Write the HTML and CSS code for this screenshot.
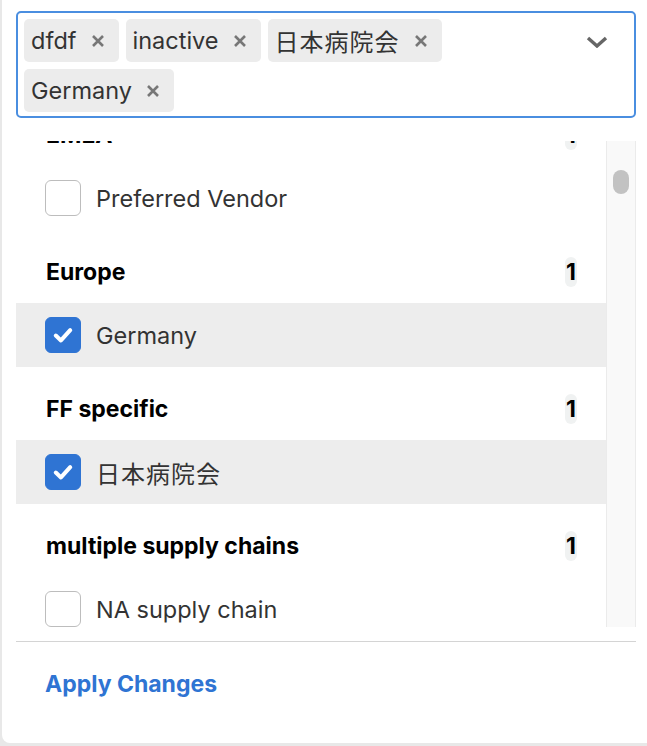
FILE: index.html
```html
<!DOCTYPE html>
<html>
<head>
<meta charset="utf-8">
<link rel="stylesheet" href="styles.css">
</head>
<body>
<div class="panel">
  <div class="select">
    <div class="chips">
      <span class="chip">dfdf<svg class="x" viewBox="0 0 14 14"><path d="M2 2L12 12M12 2L2 12"/></svg></span>
      <span class="chip">inactive<svg class="x" viewBox="0 0 14 14"><path d="M2 2L12 12M12 2L2 12"/></svg></span>
      <span class="chip"><span class="cjk">日本病院会</span><svg class="x" viewBox="0 0 14 14"><path d="M2 2L12 12M12 2L2 12"/></svg></span>
      <span class="chip">Germany<svg class="x" viewBox="0 0 14 14"><path d="M2 2L12 12M12 2L2 12"/></svg></span>
    </div>
    <svg class="chevron" viewBox="0 0 22 12"><path d="M2 2L11 10L20 2"/></svg>
  </div>
  <div class="listwrap">
    <div class="list">
      <div class="scroller">
        <div class="group-head"><span>EMEA</span><span class="count">1</span></div>
        <div class="item"><span class="box"></span><span>Preferred Vendor</span></div>
        <div class="group-head"><span>Europe</span><span class="count">1</span></div>
        <div class="item selected"><span class="box checked"><svg viewBox="0 0 20 20"><path d="M4 10.5L8.3 14.5L16 6"/></svg></span><span>Germany</span></div>
        <div class="group-head"><span>FF specific</span><span class="count">1</span></div>
        <div class="item selected"><span class="box checked"><svg viewBox="0 0 20 20"><path d="M4 10.5L8.3 14.5L16 6"/></svg></span><span class="cjk">日本病院会</span></div>
        <div class="group-head"><span>multiple supply chains</span><span class="count">1</span></div>
        <div class="item"><span class="box"></span><span>NA supply chain</span></div>
      </div>
    </div>
    <div class="scrollbar"><div class="thumb"></div></div>
  </div>
  <div class="divider"></div>
  <div class="footer"><span class="apply">Apply Changes</span></div>
</div>
</body>
</html>
```
FILE: styles.css
```css
html, body {
  margin: 0;
  padding: 0;
}
body {
  background: #e8e8e8;
  font-family: Inter, "Noto Sans CJK JP", sans-serif;
  width: 647px;
  height: 746px;
  overflow: hidden;
}
.panel {
  margin-left: 2px;
  height: 743px;
  background: #fff;
  border-bottom-left-radius: 8px;
  padding: 11px 11px 0 14px;
  box-sizing: border-box;
}
.select {
  height: 107px;
  box-sizing: border-box;
  border: 2px solid #4a8ee0;
  border-radius: 5px;
  padding: 6px 26px 4px 6px;
  display: flex;
  justify-content: space-between;
  align-items: flex-start;
}
.chips {
  display: flex;
  flex-wrap: wrap;
  gap: 7px;
  width: 540px;
}
.chip {
  height: 43px;
  background: #ececec;
  border-radius: 5px;
  padding: 0 14px 0 7px;
  display: flex;
  align-items: center;
  font-size: 23.5px;
  color: #333;
}
.cjk {
  font-family: "Noto Sans CJK JP", sans-serif;
  font-size: 24px;
  letter-spacing: 1px;
}
.x {
  width: 14px;
  height: 14px;
  margin-left: 14px;
  fill: none;
  stroke: #777;
  stroke-width: 2.6;
}
.chevron {
  width: 22px;
  height: 12px;
  margin-top: 17px;
  fill: none;
  stroke: #666;
  stroke-width: 3.4;
}
.listwrap {
  margin-top: 23px;
  height: 486px;
  display: flex;
}
.list {
  flex: 1;
  overflow: hidden;
}
.scroller {
  margin-top: -48px;
}
.group-head {
  height: 73px;
  box-sizing: border-box;
  padding: 27px 29px 16px 30px;
  display: flex;
  justify-content: space-between;
  font-weight: bold;
  font-size: 23px;
  line-height: 30px;
  color: #000;
}
.count {
  background: #f0f2f2;
  border-radius: 6px;
  width: 12px;
  text-align: center;
  line-height: 31px;
}
.item {
  height: 64px;
  display: flex;
  align-items: center;
  padding-left: 29px;
  gap: 15px;
  font-size: 23.5px;
  color: #333;
}
.item.selected {
  background: #ededed;
}
.box {
  width: 36px;
  height: 36px;
  box-sizing: border-box;
  border: 1px solid #bdbdbd;
  border-radius: 6px;
  background: #fff;
  display: flex;
  align-items: center;
  justify-content: center;
}
.box.checked {
  background: #2f74d3;
  border-color: #2f74d3;
}
.box svg {
  width: 24px;
  height: 24px;
  fill: none;
  stroke: #fff;
  stroke-width: 3.4;
  stroke-linecap: round;
  stroke-linejoin: round;
}
.scrollbar {
  width: 30px;
  box-sizing: border-box;
  background: #f9f9f9;
  border-left: 1px solid #ebebeb;
  border-right: 1px solid #ebebeb;
  padding-top: 29px;
  padding-left: 6px;
}
.thumb {
  width: 16px;
  height: 24px;
  border-radius: 8px;
  background: #c2c2c2;
}
.divider {
  margin-top: 14px;
  height: 1px;
  background: #d4d4d4;
}
.footer {
  padding: 28px 0 0 29px;
}
.apply {
  font-weight: bold;
  font-size: 23px;
  color: #2f74d3;
}
```
